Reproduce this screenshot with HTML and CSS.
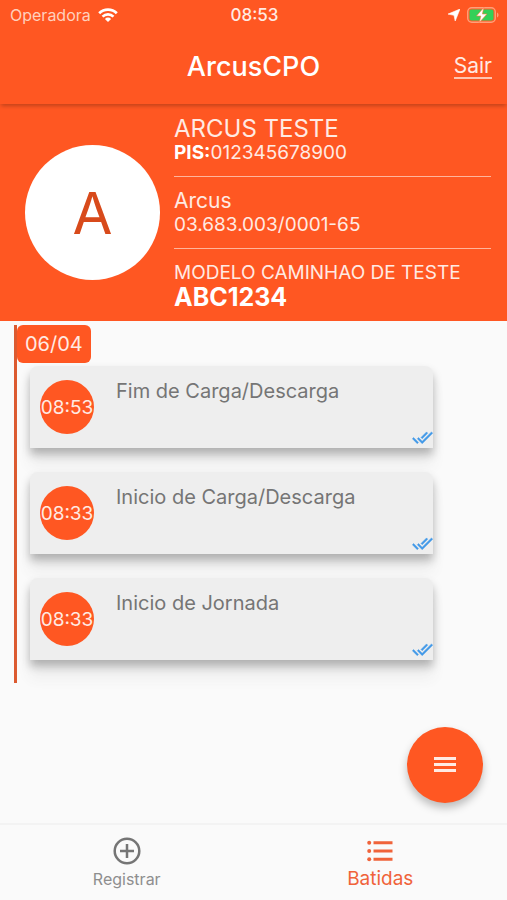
FILE: index.html
```html
<!DOCTYPE html>
<html lang="pt-BR">
<head>
<meta charset="utf-8">
<meta name="viewport" content="width=device-width, initial-scale=1">
<title>ArcusCPO</title>
<link rel="stylesheet" href="styles.css">
</head>
<body>
<div class="app">
  <div class="status">
    <div class="status-left">
      <span class="carrier">Operadora</span>
      <svg class="wifi" viewBox="0 0 20 14" aria-hidden="true">
        <path d="M1.2 5.2a12.6 12.6 0 0 1 17.6 0" fill="none" stroke="currentColor" stroke-width="2.8"/>
        <path d="M4.5 8.6a7.9 7.9 0 0 1 11 0" fill="none" stroke="currentColor" stroke-width="2.6"/>
        <path d="M10 14l-3.1-3.1a4.4 4.4 0 0 1 6.2 0z" fill="currentColor"/>
      </svg>
    </div>
    <span class="clock">08:53</span>
    <div class="status-right">
      <svg class="location" viewBox="0 0 12 12" aria-hidden="true"><path d="M12 0L7.2 12 6 6.3 0 5.1z" fill="currentColor" stroke="currentColor" stroke-width=".6"/></svg>
      <svg class="battery" viewBox="0 0 32 16" aria-hidden="true">
        <rect x=".75" y=".75" width="27.5" height="14.5" rx="4" fill="none" stroke="#ffa07a" stroke-width="1.4"/>
        <rect x="2.5" y="2.5" width="24" height="11" rx="2" fill="#34d058"/>
        <path d="M30 5.5c2 .8 2 4.2 0 5z" fill="#ffa07a"/>
        <path d="M16.8 .5L9.5 9h4.3l-1.5 6.5L20 7h-4.6z" fill="#fff" stroke="#ff7a3c" stroke-width=".6"/>
      </svg>
    </div>
  </div>

  <header class="appbar">
    <h1>ArcusCPO</h1>
    <a class="logout" href="#sair">Sair</a>
  </header>

  <section class="profile">
    <div class="avatar">A</div>
    <div class="details">
      <div class="group">
        <p class="name">ARCUS TESTE</p>
        <p class="number"><b>PIS:</b>012345678900</p>
      </div>
      <div class="group">
        <p class="company">Arcus</p>
        <p class="number">03.683.003/0001-65</p>
      </div>
      <div class="group">
        <p class="model">MODELO CAMINHAO DE TESTE</p>
        <p class="plate">ABC1234</p>
      </div>
    </div>
  </section>

  <main class="content">
    <div class="timeline">
      <h2 class="day">06/04</h2>
      <ul class="entries">
        <li class="entry">
          <span class="time">08:53</span>
          <span class="label">Fim de Carga/Descarga</span>
          <svg class="synced" viewBox="0 0 24 24" aria-hidden="true"><path d="M18 7l-1.41-1.41-6.34 6.34 1.41 1.41L18 7zm4.24-1.41L11.66 16.17 7.48 12l-1.41 1.41L11.66 19l12-12-1.42-1.41zM.41 13.41L6 19l1.41-1.41L1.83 12 .41 13.41z"/></svg>
        </li>
        <li class="entry">
          <span class="time">08:33</span>
          <span class="label">Inicio de Carga/Descarga</span>
          <svg class="synced" viewBox="0 0 24 24" aria-hidden="true"><path d="M18 7l-1.41-1.41-6.34 6.34 1.41 1.41L18 7zm4.24-1.41L11.66 16.17 7.48 12l-1.41 1.41L11.66 19l12-12-1.42-1.41zM.41 13.41L6 19l1.41-1.41L1.83 12 .41 13.41z"/></svg>
        </li>
        <li class="entry">
          <span class="time">08:33</span>
          <span class="label">Inicio de Jornada</span>
          <svg class="synced" viewBox="0 0 24 24" aria-hidden="true"><path d="M18 7l-1.41-1.41-6.34 6.34 1.41 1.41L18 7zm4.24-1.41L11.66 16.17 7.48 12l-1.41 1.41L11.66 19l12-12-1.42-1.41zM.41 13.41L6 19l1.41-1.41L1.83 12 .41 13.41z"/></svg>
        </li>
      </ul>
    </div>
    <button class="fab" type="button" aria-label="Menu">
      <svg viewBox="0 0 24 16" aria-hidden="true"><path d="M1 0h22v3H1zM1 6h22v3H1zM1 12h22v3H1z" fill="currentColor"/></svg>
    </button>
  </main>

  <nav class="tabs">
    <a class="tab" href="#registrar">
      <svg viewBox="0 0 32 32" aria-hidden="true"><g fill="none" stroke="currentColor" stroke-width="2.5"><circle cx="16" cy="16" r="12.3"/><path d="M16 9v14M9 16h14"/></g></svg>
      <span>Registrar</span>
    </a>
    <a class="tab active" href="#batidas">
      <svg viewBox="0 0 32 32" aria-hidden="true"><path d="M9.5 6.3h19v3h-19zM9.5 14.5h19v3h-19zM9.5 22.7h19v3h-19z" fill="currentColor"/><g fill="currentColor"><circle cx="5.2" cy="7.8" r="2"/><circle cx="5.2" cy="16" r="2"/><circle cx="5.2" cy="24.2" r="2"/></g></svg>
      <span>Batidas</span>
    </a>
  </nav>
</div>
</body>
</html>
```

FILE: styles.css
```css
:root {
  --brand: #ff5722;
  --on-brand: #ffeae3;
  --page: #fafafa;
}

* { box-sizing: border-box; }

body {
  margin: 0;
  background: var(--page);
  font-family: Inter, Roboto, sans-serif;
}

h1, h2, p, ul { margin: 0; padding: 0; }

.app {
  display: flex;
  flex-direction: column;
  min-height: 100vh;
}

.status {
  display: grid;
  grid-template-columns: 1fr auto 1fr;
  align-items: center;
  height: 30px;
  padding: 0 8px 0 10px;
  background: var(--brand);
  color: #fff;
  font-size: 16px;
}

.status-left, .status-right {
  display: flex;
  align-items: center;
  gap: 7px;
}

.status-right { justify-content: flex-end; }
.carrier { color: #ffd0bd; }
.clock { font-size: 17px; font-weight: 500; color: var(--on-brand); }
.wifi { width: 20px; height: 14px; }
.location { width: 12px; height: 12px; }
.battery { width: 32px; height: 16px; }

.appbar {
  display: grid;
  grid-template-columns: 1fr auto 1fr;
  align-items: center;
  height: 74px;
  padding: 0 15px;
  position: relative;
  background: var(--brand);
  color: #fff;
  box-shadow: 0 3px 4px -1px rgba(0, 0, 0, .24);
}

.appbar h1 {
  grid-column: 2;
  font-size: 27px;
  font-weight: 500;
  line-height: 32px;
}

.logout {
  justify-self: end;
  color: var(--on-brand);
  font-size: 21px;
  line-height: 22px;
  text-decoration: none;
  border-bottom: 2px solid #ffc4b0;
}

.profile {
  display: flex;
  align-items: center;
  gap: 14px;
  padding: 0 16px 0 25px;
  background: var(--brand);
  color: var(--on-brand);
}

.avatar {
  display: flex;
  align-items: center;
  justify-content: center;
  flex: none;
  width: 135px;
  height: 135px;
  border-radius: 50%;
  background: #fff;
  color: #d84a1b;
  font-size: 58px;
}

.details { flex: 1; }

.group { padding: 12px 0 11px; }
.group + .group { border-top: 1px solid #ffb59c; }
.group:first-child { padding-top: 13px; }
.group:last-child { padding-bottom: 12px; }
.group p { line-height: 24px; }
.name { font-size: 24px; }
.number { font-size: 19px; }
.number b { color: #fff; }
.company { font-size: 21px; }
.model { font-size: 19px; }
.plate { font-size: 25px; font-weight: 700; color: #fff; }

.content {
  position: relative;
  flex: 1;
  padding: 4px 14px 20px;
}

.timeline {
  padding-bottom: 23px;
  border-left: 3px solid #dc5a30;
}

.day {
  width: fit-content;
  padding: 0 8px;
  border-radius: 6px;
  background: var(--brand);
  color: var(--on-brand);
  font-size: 20px;
  font-weight: 400;
  line-height: 38px;
}

.entries {
  display: flex;
  flex-direction: column;
  gap: 24px;
  margin: 3px 60px 0 13px;
  list-style: none;
}

.entry {
  position: relative;
  display: flex;
  gap: 22px;
  height: 82px;
  padding: 14px 10px;
  border-radius: 8px 8px 0 0;
  background: #eee;
  box-shadow: 0 6px 10px rgba(0, 0, 0, .27), 0 18px 14px #eee;
}

.time {
  display: flex;
  align-items: center;
  justify-content: center;
  flex: none;
  width: 54px;
  height: 54px;
  border-radius: 50%;
  background: var(--brand);
  color: var(--on-brand);
  font-size: 19px;
}

.label {
  color: #757575;
  font-size: 20px;
  line-height: 22px;
}

.synced {
  position: absolute;
  right: 0;
  bottom: 0;
  width: 21px;
  height: 21px;
  fill: #4299e8;
  stroke: #4299e8;
  stroke-width: .5;
}

.fab {
  position: absolute;
  right: 24px;
  bottom: 20px;
  display: flex;
  align-items: center;
  justify-content: center;
  width: 76px;
  height: 76px;
  padding: 0;
  border: 0;
  border-radius: 50%;
  background: var(--brand);
  color: var(--on-brand);
  box-shadow: 0 5px 8px rgba(0, 0, 0, .25);
}

.fab svg { width: 24px; height: 16px; }

.tabs {
  display: flex;
  height: 77px;
  border-top: 2px solid #f3f3f3;
}

.tab {
  display: flex;
  flex: 1;
  flex-direction: column;
  align-items: center;
  padding-top: 10px;
  color: #757575;
  font-size: 16px;
  line-height: 24px;
  text-decoration: none;
}

.tab svg { width: 32px; height: 32px; }
.tab span { color: #8e8e8e; }
.tab.active, .tab.active span { color: #f0633a; }
.tab.active { font-size: 19px; }
```
